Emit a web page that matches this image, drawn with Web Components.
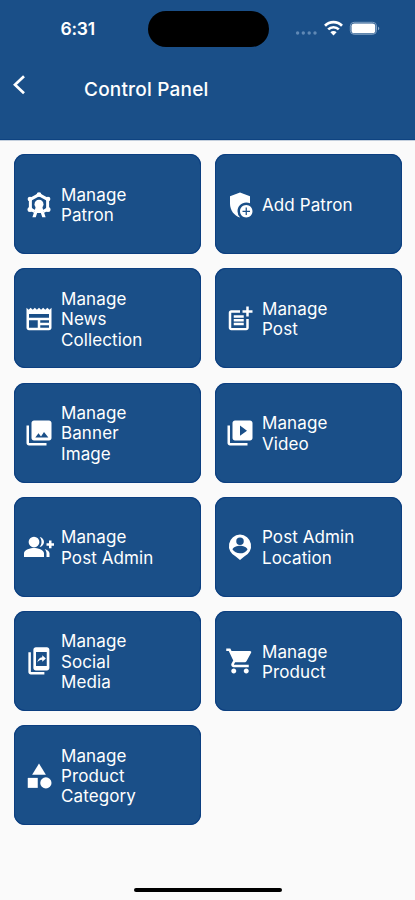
<!DOCTYPE html>
<html lang="en">
<head>
<meta charset="utf-8">
<title>Control Panel</title>
<style>
html,body{margin:0;height:100%;background:#fafafa}
body{font-family:Inter,"Liberation Sans",sans-serif;overflow:hidden}
</style>
</head>
<body>
<control-panel></control-panel>
<script>
const ICONS = {
  attractions: '<path fill="none" stroke="currentColor" stroke-width="2.400" stroke-linejoin="round" d="M12 3.700l6.900 3.800v7.800L12 19.100l-6.900-3.800V7.500z"/><circle cx="12" cy="3.600" r="1.900"/><circle cx="4.800" cy="7.200" r="1.900"/><circle cx="19.200" cy="7.200" r="1.900"/><circle cx="4.800" cy="15.600" r="2"/><circle cx="19.200" cy="15.600" r="2"/><path fill="#1a4f88" d="M8.300 17l-1.500 5h10.400l-1.500-5z"/><circle cx="12" cy="11.400" r="3.600"/><path d="M9.600 13L6.700 21.700h2.700l1.100-3.300h3l1.100 3.300h2.700L14.400 13z"/>',
  shield: '<path d="M20 10.68V5l-8-3-8 3v6.09c0 5.05 3.41 9.76 8 10.91l.1-.03A6.96 6.96 0 0 1 10 17c0-3.87 3.13-7 7-7 1.07 0 2.09.25 3 .68z"/><path d="M17 12c-2.76 0-5 2.24-5 5s2.24 5 5 5 5-2.24 5-5-2.24-5-5-5zm3 5.5h-2.5V20h-1v-2.5H14v-1h2.5V14h1v2.5H20v1z"/>',
  news: '<path d="M22 3l-1.67 1.67L18.67 3 17 4.67 15.33 3l-1.66 1.67L12 3l-1.67 1.67L8.67 3 7 4.67 5.33 3 3.67 4.67 2 3v16c0 1.1.9 2 2 2h16c1.1 0 2-.9 2-2V3zM11 19H4v-6h7v6zm9 0h-7v-2h7v2zm0-4h-7v-2h7v2zm0-4H4V8h16v3z"/>',
  post: '<path d="M17 19.22H5V7h7V5H5c-1.1 0-2 .9-2 2v12c0 1.1.9 2 2 2h12c1.1 0 2-.9 2-2v-7h-2v7.22zM19 2h-2v3h-3v2h3v3h2V7h3V5h-3V2zM7 9h8v2H7zM7 12h8v2H7zM7 15h8v2H7z"/>',
  photo: '<path d="M22 16V4c0-1.1-.9-2-2-2H8c-1.1 0-2 .9-2 2v12c0 1.1.9 2 2 2h12c1.1 0 2-.9 2-2zM9 15.500l2.600-3.300 2 2.500 2.400-3.500 3.500 4.300zM2 6v14c0 1.100.9 2 2 2h14v-2H4V6H2z"/>',
  video: '<path d="M4 6H2v14c0 1.1.9 2 2 2h14v-2H4V6zm16-4H8c-1.1 0-2 .9-2 2v12c0 1.1.9 2 2 2h12c1.1 0 2-.9 2-2V4c0-1.1-.9-2-2-2zm-8 12.200v-8.200l5.600 4.100-5.600 4.100z"/>',
  group: '<path d="M22 8V6.800h-2v2.200h-2v2h2v2h2v-2h2V9h-2z"/><circle cx="8" cy="8" r="4.300"/><path d="M8 12.700c-2.670 0-8 1.340-8 4.300v3h16v-3c0-2.960-5.330-4.300-8-4.300zM12.510 4.050C13.430 5.110 14 6.490 14 8s-.57 2.890-1.490 3.950C14.470 11.700 16 10.040 16 8s-1.530-3.700-3.490-3.950zM16.530 13.500C17.420 14.500 18 15.700 18 17v3h2.400v-3c0-1.450-1.890-2.900-3.870-3.500z"/>',
  pin: '<path fill-rule="evenodd" d="M12 1.900a9.200 9.200 0 0 0-3.400 17.600L12 22.300l3.400-2.800A9.200 9.200 0 0 0 12 1.900zM12 4.300a3 3 0 1 1 0 6 3 3 0 0 1 0-6zM12 17c-2.500 0-4.700-1.200-6-3.100.1-1.900 4-3 6-3s5.900 1.100 6 3A7.200 7.200 0 0 1 12 17z"/>',
  share: '<path d="M3.500 5v15.700c0 1.100.9 2 2 2h10.800v-2H5.500V5z"/><path fill-rule="evenodd" d="M9.500 1h8.800c1.100 0 2 .9 2 2v14.600c0 1.100-.9 2-2 2H9.500c-1.100 0-2-.9-2-2V3c0-1.100.9-2 2-2zM9.600 4.700v11.300h8.600V4.700z"/><path d="M14.600 7.300l2.900 2.600-2.900 2.600v-1.500c-1.900 0-3 .7-3.900 2.100.3-2.200 1.500-3.900 3.900-4.200z"/>',
  cart: '<path d="M7 18c-1.100 0-1.990.9-1.990 2S5.900 22 7 22s2-.9 2-2-.9-2-2-2zM1 2v2h2l3.600 7.590-1.350 2.450c-.16.28-.25.61-.25.96 0 1.100.9 2 2 2h12v-2H7.420c-.14 0-.25-.11-.25-.25l.03-.12.9-1.630h7.450c.75 0 1.410-.41 1.750-1.030l3.580-6.490A1.003 1.003 0 0 0 20 4H5.210l-.94-2H1zm16 16c-1.100 0-1.990.9-1.990 2s.89 2 1.990 2 2-.9 2-2-.9-2-2-2z"/>',
  category: '<path d="M12 2l-5.500 9h11z"/><circle cx="17.500" cy="17.500" r="4.500"/><path d="M3 13.500h8v8H3z"/>'
};

class StatusBar extends HTMLElement {
  constructor() {
    super();
    this.attachShadow({mode: 'open'}).innerHTML = `<style>
      :host{display:grid;grid-template-columns:147.500px 121px 1fr;height:58px;box-sizing:border-box;padding-top:11px}
      .time{padding:8px 0 0 60.500px;font-size:17.500px;line-height:20px;font-weight:600;letter-spacing:-.2px}
      .island{height:35.500px;border-radius:18px;background:#000}
      .status{display:flex;padding:9px 0 0 26px}
      svg{display:block}
    </style>
    <div class="time">6:31</div><div class="island"></div>
    <div class="status"><svg width="86" height="18" viewBox="0 0 86 18" fill="#fff">
      <g fill="#6089b5"><circle cx="2.600" cy="13" r="1.700"/><circle cx="8.300" cy="13" r="1.700"/><circle cx="14.200" cy="13" r="1.700"/><circle cx="20" cy="13" r="1.700"/></g>
      <g fill="none" stroke="#fff" stroke-width="2.700"><path d="M30 5.700a12 12 0 0 1 17 0"/><path d="M33.200 9.400a7.600 7.600 0 0 1 10.600 0"/></g>
      <path d="M35.400 12.200a4.400 4.400 0 0 1 6.200 0l-3.100 3.200z"/>
      <rect x="55.300" y="2.300" width="26.200" height="12" rx="3.800" fill="none" stroke="#7f9fc2"/>
      <rect x="56.500" y="3.400" width="23.800" height="9.800" rx="2.800"/>
      <path d="M83 6.400q2.600 1.900 0 3.900z" fill="#8aa8c8"/>
    </svg></div>`;
  }
}
customElements.define('status-bar', StatusBar);

class AppHeader extends HTMLElement {
  constructor() {
    super();
    this.attachShadow({mode: 'open'}).innerHTML = `<style>
      :host{display:block;height:140px;background:#1a4f88;color:#fff;box-shadow:inset 0 -1px #0e4381,0 1px #c3cfdd}
      .bar{display:grid;grid-template-columns:84px 1fr;align-items:start}
      svg{display:block;margin:16px 0 0 10.500px}
      .title{font-size:19px;line-height:24px;font-weight:500;padding-top:20px;letter-spacing:.2px}
    </style>
    <slot name="status"></slot>
    <div class="bar"><svg width="16" height="22" viewBox="0 0 16 22" fill="none" stroke="#fff" stroke-width="2.700"><path d="M13 2.200L4 10.700l9 8.500"/></svg><div class="title"><slot></slot></div></div>`;
  }
}
customElements.define('app-header', AppHeader);

class PanelTile extends HTMLElement {
  connectedCallback() {
    if (this.shadowRoot) return;
    this.attachShadow({mode: 'open'}).innerHTML = `<style>
      :host{display:grid;grid-template-columns:30px 1fr;column-gap:7px;align-items:center;box-sizing:border-box;padding:0 44px 0 10px;border-radius:11px;background:#1a4f88;box-shadow:inset 0 0 0 1px #0c3f80;color:#fff}
      svg{display:block;fill:currentColor;margin-top:1px}
      .label{font-size:17px;line-height:20.400px;font-weight:430;white-space:pre-line;letter-spacing:.1px;padding-top:2px}
    </style><svg width="30" height="30" viewBox="0 0 24 24">${ICONS[this.getAttribute('icon')]}</svg><div class="label"><slot></slot></div>`;
  }
}
customElements.define('panel-tile', PanelTile);

class ControlPanel extends HTMLElement {
  constructor() {
    super();
    this.attachShadow({mode: 'open'}).innerHTML = `<style>
      :host{display:flex;flex-direction:column;height:900px;width:415px;background:#fafafa}
      main{flex:1;display:grid;grid-template-columns:187px 187px;grid-auto-rows:100px;gap:14.200px 14px;padding:14.200px 14px 0;align-content:start}
      footer{display:flex;justify-content:center;padding-bottom:8px}
      footer i{display:block;width:148px;height:4px;border-radius:2px;background:#000}
    </style>
    <app-header><status-bar slot="status"></status-bar>Control Panel</app-header>
    <main>
      <panel-tile icon="attractions">Manage\nPatron</panel-tile>
      <panel-tile icon="shield">Add Patron</panel-tile>
      <panel-tile icon="news">Manage\nNews\nCollection</panel-tile>
      <panel-tile icon="post">Manage\nPost</panel-tile>
      <panel-tile icon="photo">Manage\nBanner\nImage</panel-tile>
      <panel-tile icon="video">Manage\nVideo</panel-tile>
      <panel-tile icon="group">Manage\nPost Admin</panel-tile>
      <panel-tile icon="pin">Post Admin\nLocation</panel-tile>
      <panel-tile icon="share">Manage\nSocial\nMedia</panel-tile>
      <panel-tile icon="cart">Manage\nProduct</panel-tile>
      <panel-tile icon="category">Manage\nProduct\nCategory</panel-tile>
    </main>
    <footer><i></i></footer>`;
  }
}
customElements.define('control-panel', ControlPanel);
</script>
</body>
</html>
